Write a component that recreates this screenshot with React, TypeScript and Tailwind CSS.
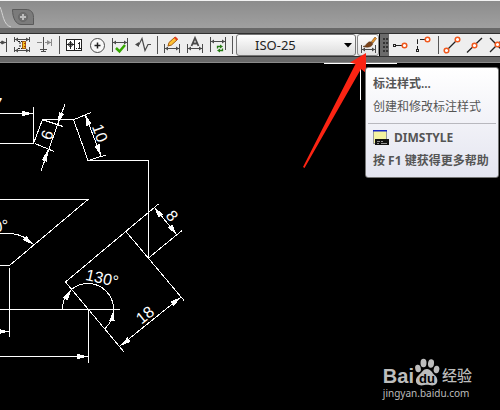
import React from 'react';
import { clsx } from 'clsx';

type IconProps = { children: React.ReactNode };

function Icon({ children }: IconProps) {
  return (
    <svg width="23" height="22" viewBox="0 0 23 22" fill="none" stroke="#4a4a4a" className="shrink-0">
      {children}
    </svg>
  );
}

function ToolButton({ label, clipped, children }: IconProps & { label: string; clipped?: boolean }) {
  return (
    <button
      type="button"
      aria-label={label}
      title={label}
      className={clsx('flex h-[22px] shrink-0 justify-end overflow-hidden', clipped ? 'w-[10px]' : 'w-[23px]')}
    >
      <Icon>{children}</Icon>
    </button>
  );
}

function Divider() {
  return (
    <div className="flex w-[6px] shrink-0 justify-center">
      <div className="my-0.5 w-px bg-[#555]" />
    </div>
  );
}

const ring = { fill: '#fff', stroke: '#f0571b', strokeWidth: 1.5 };

function DimensionBar() {
  return (
    <div className="flex h-[22px] shrink-0 items-stretch bg-[#eee]">
      <ToolButton label="Continue dimension" clipped>
        <path d="M19.500 4v14M11 8.500h8" />
        <path d="M19 8.500l-4-2v4zM13 8.500l2-2v4z" fill="#4a4a4a" stroke="none" />
      </ToolButton>
      <ToolButton label="Dimension space">
        <path d="M4.500 3v5M19.500 3v5M4.500 13v5M19.500 13v5M4 5.500h16M4 16.500h16" />
        <path d="M5 5.500l3-2v4zM19 5.500l-3-2v4zM5 16.500l3-2v4zM19 16.500l-3-2v4z" fill="#4a4a4a" stroke="none" />
        <path d="M8 7.500h4M8 14.500h4M10 8v6" stroke="#222" strokeDasharray="2 1" />
        <rect x="12.500" y="7.500" width="3" height="7" fill="#f6c21c" stroke="#a35a10" />
        <path d="M14 9.500h2M14 12.500h2" stroke="#a33a10" />
      </ToolButton>
      <ToolButton label="Dimension break">
        <path d="M4 8.500h5M12 8.500h6M18.500 5v7" stroke="#8b8b8b" />
        <path d="M18 8.500l-4-2.500v5z" fill="#8b8b8b" stroke="none" />
        <path d="M10.500 3v14M7 15.500h7M8 17.500h5" />
      </ToolButton>
      <Divider />
      <ToolButton label="Tolerance">
        <rect x="4.500" y="5.500" width="15" height="11" fill="#fff" stroke="#222" />
        <path d="M12.500 5v12M5 10.500h7M8.500 7v8" stroke="#222" />
        <circle cx="8.500" cy="10.500" r="2" stroke="#222" />
        <path d="M14 14.500h1M17.500 8v6M16 14.500h3M16 9.500h1" stroke="#222" />
      </ToolButton>
      <ToolButton label="Center mark">
        <circle cx="12.500" cy="11.500" r="7" fill="#f8f8f8" />
        <path d="M9.500 11.500h6M12.500 8.500v6" stroke="#222" strokeWidth="1.500" />
      </ToolButton>
      <ToolButton label="Inspection">
        <path d="M4.500 4v14M19.500 4v13M5 8.500h14" />
        <path d="M5 8.500l3-2v4zM19 8.500l-3-2v4z" fill="#4a4a4a" stroke="none" />
        <path d="M8 14l3.500 3.500L17 11" stroke="#35a800" strokeWidth="2.500" />
      </ToolButton>
      <ToolButton label="Jogged linear">
        <path d="M5 10.500h3l3-6 3 12 3-6h3" strokeWidth="1.200" />
        <path d="M4 10.500l4-2.500v5z" fill="#4a4a4a" stroke="none" />
      </ToolButton>
      <Divider />
      <ToolButton label="Dimension edit">
        <path d="M4.500 10v9M19.500 10v9M5 14.500h14" />
        <path d="M5 14.500l3-2v4zM19 14.500l-3-2v4z" fill="#4a4a4a" stroke="none" />
        <path d="M8 12l1-3.500 6-5.500 2.500 2.500-6 5.500z" fill="#ffc233" stroke="#a35a10" />
        <path d="M14 4l1.500-1.500L18 5l-1.500 1.500z" fill="#e33d22" stroke="none" />
      </ToolButton>
      <ToolButton label="Dimension text edit">
        <path d="M4.500 10v9M19.500 10v9M5 14.500h14" />
        <path d="M5 14.500l3-2v4zM19 14.500l-3-2v4z" fill="#4a4a4a" stroke="none" />
        <path d="M8.500 12L12 4l3.500 8M9.500 9.500h5" strokeWidth="1.800" />
      </ToolButton>
      <ToolButton label="Dimension update">
        <path d="M4.500 3v15M19.500 3v13M5 7.500h14" />
        <path d="M5 7.500l3-2v4zM19 7.500l-3-2v4z" fill="#4a4a4a" stroke="none" />
        <path d="M11.500 14.500V12.500H14M16.500 14.500V16.500H14" stroke="#237a12" strokeWidth="1.300" />
        <path d="M14 10.500l3 2-3 2zM14 14.500l-3 2 3 2z" fill="#237a12" stroke="none" />
      </ToolButton>
      <Divider />
      <div className="relative ml-px flex w-[120px] shrink-0">
        <select
          aria-label="Dimension style"
          defaultValue="ISO-25"
          className="w-full appearance-none rounded-[3px] border border-[#777] bg-linear-to-b from-white to-[#dcdcdc] pl-[18px] font-['Noto_Sans',sans-serif] text-[13px] leading-5 text-[#222]"
        >
          <option>ISO-25</option>
        </select>
        <svg width="8" height="5" viewBox="0 0 8 5" className="pointer-events-none absolute top-[9px] right-1">
          <path d="M0 0h8L4 4.500z" fill="#000" />
        </svg>
      </div>
      <button
        type="button"
        aria-label="标注样式"
        className="ml-px flex w-[22px] shrink-0 items-center justify-center overflow-hidden rounded-[3px] border border-[#888] bg-linear-to-b from-white to-[#e2e2e2]"
      >
        <Icon>
          <path d="M4.500 11v8M18.500 11v8M5 15.500h13" />
          <path d="M5 15.500l3-2v4zM18 15.500l-3-2v4z" fill="#4a4a4a" stroke="none" />
          <path d="M14.500 7.500l3.500-4.500 1.500 1.500-3.500 4.500z" fill="#e8952c" stroke="#7a4a1a" strokeWidth="0.600" />
          <path d="M6 12.500c2.500-.5 3-2 4.500-3.500s3-1.500 4.500-.5.5 3-1.500 4-5 .8-7.500 0z" fill="#7a431b" stroke="#4f2c12" strokeWidth="0.500" />
        </Icon>
      </button>
    </div>
  );
}

function SnapBar() {
  return (
    <div className="flex h-[22px] min-w-0 grow items-stretch overflow-hidden bg-[#eee]">
      <ToolButton label="Temporary track point">
        <path d="M7 11.500h6" stroke="#222" />
        <rect x="4.500" y="10.500" width="2" height="2" stroke="#222" />
        <circle cx="15.500" cy="11.500" r="2.300" {...ring} />
      </ToolButton>
      <ToolButton label="Snap from">
        <path d="M13 5.500H5.500V15" stroke="#222" strokeDasharray="5 2" />
        <rect x="4.500" y="15.500" width="2" height="2" stroke="#222" />
        <circle cx="15.500" cy="5.500" r="2.300" {...ring} />
      </ToolButton>
      <Divider />
      <ToolButton label="Endpoint">
        <path d="M5.500 16.500l11-11" stroke="#222" strokeWidth="1.300" />
        <circle cx="5.500" cy="16.500" r="2.300" {...ring} />
        <circle cx="16.500" cy="5.500" r="2.300" {...ring} />
      </ToolButton>
      <ToolButton label="Midpoint">
        <path d="M3 18.500L18 4" stroke="#222" strokeWidth="1.300" />
        <circle cx="10.500" cy="11.500" r="2.300" {...ring} />
      </ToolButton>
      <ToolButton label="Intersection">
        <path d="M3 4l14 14M3 18L17 4" stroke="#222" strokeWidth="1.300" />
        <circle cx="10.500" cy="10.500" r="2.300" {...ring} />
      </ToolButton>
    </div>
  );
}

// Filled arrowhead pointing from (bx, by) to the tip (x, y)
function Head({ x, y, bx, by }: { x: number; y: number; bx: number; by: number }) {
  const len = Math.hypot(x - bx, y - by);
  const nx = (-(y - by) / len) * 2.7;
  const ny = ((x - bx) / len) * 2.7;
  return <polygon points={`${x},${y} ${bx + nx},${by + ny} ${bx - nx},${by - ny}`} fill="#fff" />;
}

function Label({ x, y, angle, children }: { x: number; y: number; angle: number; children: string }) {
  return (
    <text
      transform={`translate(${x} ${y}) rotate(${angle})`}
      textAnchor="middle"
      dominantBaseline="central"
      fill="#fff"
      stroke="none"
      className="font-['Liberation_Sans',Arial,sans-serif] text-[16px]"
    >
      {children}
    </text>
  );
}

function Drawing() {
  return (
    <svg width="500" height="347" viewBox="0 63 500 347" fill="none" stroke="#fff" className="block overflow-visible">
      <g shapeRendering="crispEdges">
        <path d="M0 143.500H33.500L42.500 119.500H73.500L88 160.500H148.500V258" />
        <path d="M0 113.500H33M33.500 107V143M65 104L41 171M42 119.500L63 126.500M35 143.500L54 151.500" />
        <path d="M74 119.500L91 112.500M88 160.500L106 155M85 114L101 156" />
        <path d="M0 199.500H88L9.500 265.500H0M9.500 268V337M0 331.500H9" />
        <path d="M0 233.500H12Q24 235 33 244" />
        <path d="M0 309.500H120M88.500 310V363M0 356.500H88" />
        <path d="M65.500 282L158.500 204M125.500 231L184 300.500M65.500 282L124 352M148.500 258L182 230.500" />
        <path d="M154.500 207.500L177 235M120 346L181 297" />
        <path d="M62.500 309A25.500 25.500 0 0 1 113.500 309A27 27 0 0 1 104.500 329" />
        <path d="M324 63.500H397M360.500 63V100" />
        <g stroke="none">
          <Head x={33} y={113.5} bx={22} by={113.5} />
          <Head x={57.5} y={124} bx={61.5} by={113} />
          <Head x={48} y={149} bx={44.5} by={161} />
          <Head x={85} y={114} bx={89} by={125} />
          <Head x={101} y={156} bx={97} by={145} />
          <Head x={34} y={245} bx={24.5} by={238} />
          <Head x={9} y={331.5} bx={-2} by={331.5} />
          <Head x={88} y={356.5} bx={77} by={356.5} />
          <Head x={154} y={207} bx={161} by={216} />
          <Head x={177} y={235} bx={170} by={226} />
          <Head x={120} y={346} bx={129} by={339.5} />
          <Head x={181} y={297} bx={172} by={304} />
          <Head x={71} y={290} bx={65.5} by={299} />
          <Head x={113.5} y={310} bx={112} by={321} />
        </g>
      </g>
      <Label x={-2} y={104} angle={0}>7</Label>
      <Label x={47} y={135} angle={-70}>6</Label>
      <Label x={100} y={133} angle={70}>10</Label>
      <Label x={1} y={226} angle={-8}>0°</Label>
      <Label x={172} y={216} angle={50}>8</Label>
      <Label x={102} y={278} angle={13}>130°</Label>
      <Label x={145} y={315} angle={-39}>18</Label>
      <path d="M366 53L350 62.500L355.500 64L303 167L304.500 168L361 69L366 73Z" fill="#fb2413" stroke="none" />
    </svg>
  );
}

function StyleTooltip() {
  return (
    <div
      role="tooltip"
      className="absolute top-1 left-[365px] w-[134px] rounded-[3px] border border-[#767676] bg-linear-to-b from-white to-[#e4e5f0] py-[7px] font-['Noto_Sans','Noto_Sans_CJK_SC',sans-serif] text-[12px] leading-[18px] whitespace-nowrap text-[#555]"
    >
      <p className="pl-[7px] font-semibold">标注样式...</p>
      <p className="mt-[5px] pl-[7px]">创建和修改标注样式</p>
      <hr className="mx-0.5 mt-[7px] border-[#b8b8be]" />
      <div className="mt-[5px] flex items-center gap-1 pl-[7px]">
        <svg width="17" height="16" viewBox="0 0 17 16">
          <rect x="0.500" y="0.500" width="13" height="13" fill="#f5f3a0" stroke="#9a9a9a" />
          <path d="M0 0h14v1.500H0z" fill="#1726c4" />
          <path d="M2 9h14v6H2z" fill="#111" />
          <path d="M4 11.500h3M8 11.500h2M4 13.500h2M8 13.500h6" stroke="#999" />
        </svg>
        <span className="font-bold">DIMSTYLE</span>
      </div>
      <p className="mt-[5px] pl-[7px] font-bold">按 F1 键获得更多帮助</p>
    </div>
  );
}

function Watermark() {
  return (
    <div className="absolute right-[28px] bottom-[10px] flex flex-col text-[#bdbdbd]">
      <div className="flex h-[28px] items-end">
        <span className="font-['Liberation_Sans',Arial,sans-serif] text-[20px] leading-5 font-bold">Bai</span>
        <svg width="26" height="28" viewBox="0 0 26 28" fill="#bdbdbd">
          <ellipse cx="4" cy="10.500" rx="2.800" ry="3.800" transform="rotate(-12 4 10.500)" />
          <ellipse cx="9.500" cy="5" rx="3" ry="4.200" />
          <ellipse cx="17" cy="5.500" rx="3" ry="4.200" transform="rotate(8 17 5.500)" />
          <ellipse cx="22.500" cy="11.500" rx="2.800" ry="3.800" transform="rotate(12 22.500 11.500)" />
          <path d="M13 11c4 0 5 4 8 6.500s3.500 8-.5 9.500c-3 1-5-.3-7.500-.3S8 28 5 27c-4-1.500-4-6.500-.5-9.500S9 11 13 11z" />
          <text x="13" y="25" textAnchor="middle" fill="#000" className="font-['Liberation_Sans',Arial,sans-serif] text-[13px] font-bold">
            du
          </text>
        </svg>
        <span className="ml-0.5 pb-0.5 font-['Noto_Sans_CJK_SC',sans-serif] text-[15px] leading-[18px] font-medium">经验</span>
      </div>
      <span className="font-['Noto_Sans',sans-serif] text-[10px] leading-[14px]">jingyan.baidu.com</span>
    </div>
  );
}

export default function App() {
  return (
    <div className="flex min-h-screen flex-col overflow-hidden bg-black">
      <header className="flex h-[28px] items-start border-t border-[#f2f2f2] bg-linear-to-b from-[#8c8c8c] to-[#a0a0a0]">
        <svg width="12" height="27" viewBox="0 0 12 27" fill="none">
          <path d="M0 6c3 6 3 18 10 20L12 27H0z" fill="#969696" />
          <path d="M0 6c3 6 3 18 11 20" stroke="#d4d4d4" />
        </svg>
        <button type="button" aria-label="New tab" className="mt-2">
          <svg width="22" height="16" viewBox="0 0 22 16" fill="none">
            <path d="M.5.500H14c5 0 7.500 3 7.500 8v7H9C4 15.500.500 9 .500.500z" fill="#7b7b7b" stroke="#5a5a5a" />
            <circle cx="11" cy="8" r="4.500" fill="#707070" stroke="#686868" />
            <path d="M11 5v6M8 8h6" stroke="#bdbdbd" strokeWidth="2" />
          </svg>
        </button>
      </header>

      <div role="toolbar" className="flex items-stretch border-t-[5px] border-b-[5px] border-[#696969]">
        <div className="flex grow border-y border-[#303030]">
          <DimensionBar />
          <div className="ml-px flex w-[9px] shrink-0 justify-center bg-[#6b6b6b]">
            <div className="my-1 ml-0.5 w-[5px] border-x-2 border-dotted border-[#333]" />
          </div>
          <SnapBar />
        </div>
      </div>

      <main className="relative grow border-t border-[#8a8a8a] bg-black">
        <Drawing />
        <StyleTooltip />
        <Watermark />
      </main>
    </div>
  );
}
